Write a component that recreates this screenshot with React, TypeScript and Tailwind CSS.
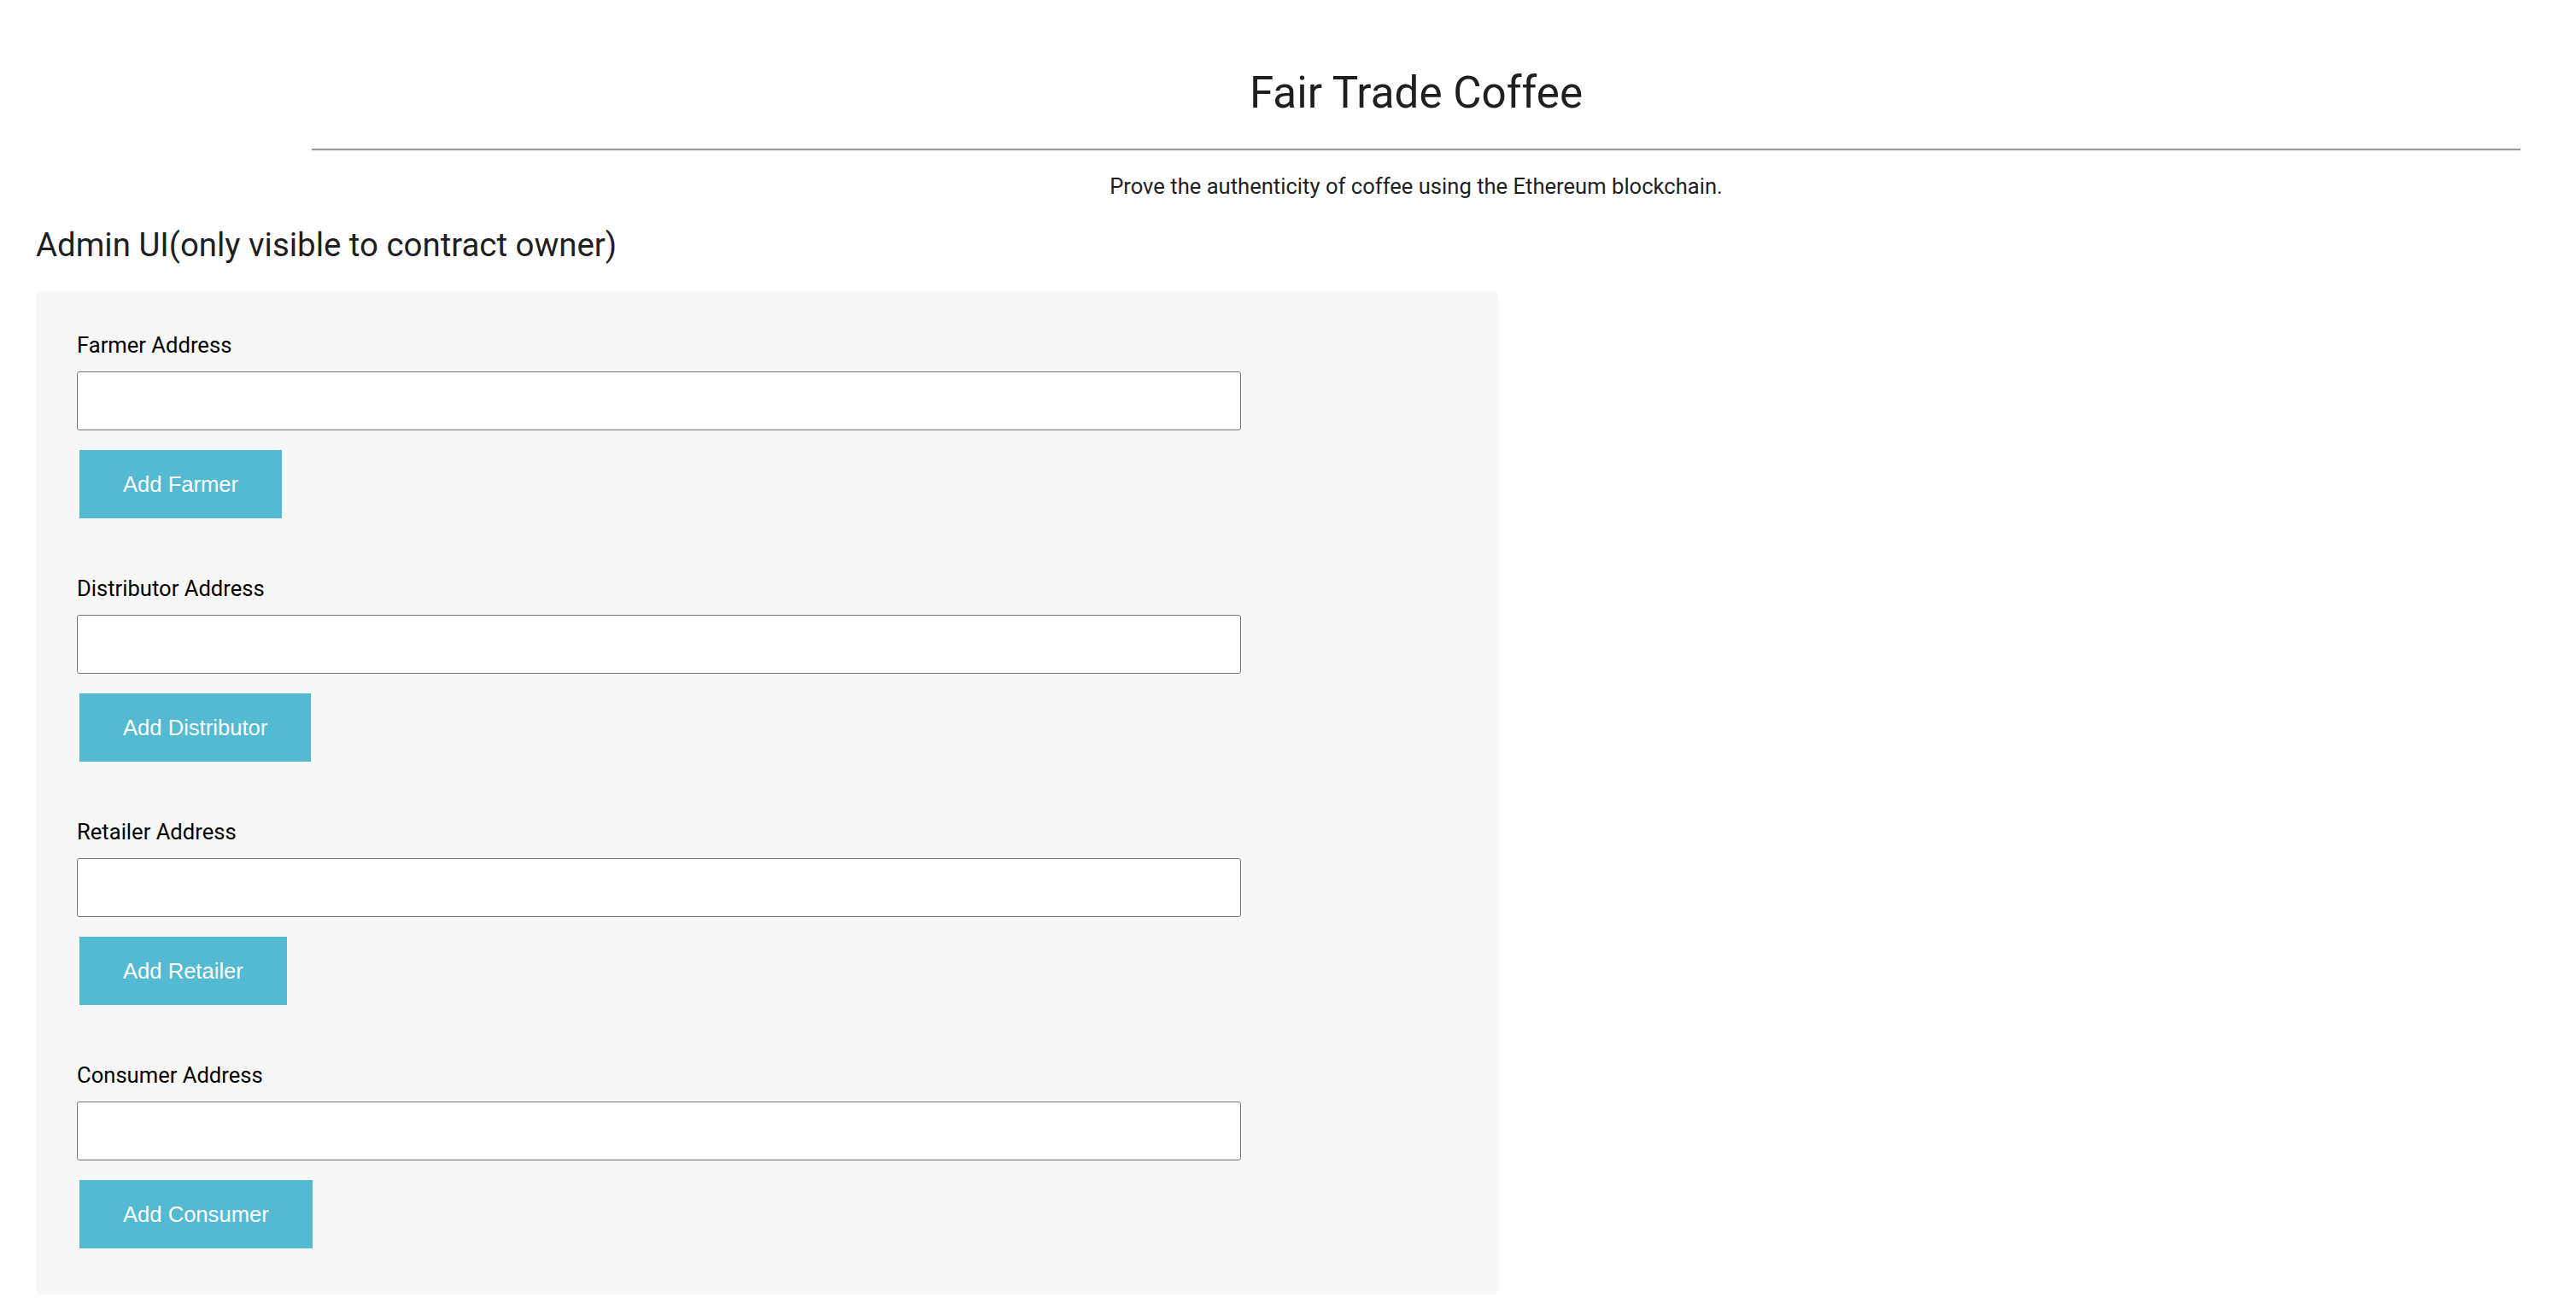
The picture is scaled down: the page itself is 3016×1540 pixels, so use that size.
import * as React from 'react';

const roles = [
  { label: 'Farmer Address', button: 'Add Farmer' },
  { label: 'Distributor Address', button: 'Add Distributor' },
  { label: 'Retailer Address', button: 'Add Retailer' },
  { label: 'Consumer Address', button: 'Add Consumer' },
];

function RoleForm({ label, button }: { label: string; button: string }) {
  return <div className="flex flex-col items-start">
    <label className="text-[25.6px] leading-[26px] text-black">{label}</label>
    <input type="text" className="mt-[18px] w-[1363px] h-[69px] bg-white border border-[#767676] rounded-[3px] px-3 text-[24px] outline-none" />
    <button className="mt-[23px] ml-[3px] h-[80px] px-[51px] bg-[#53bad2] text-white text-[25.6px] font-['Liberation_Sans',Arial,sans-serif]">
      {button}
    </button>
  </div>
}

export default function App() {
  return <div className="min-h-screen bg-white font-['Roboto',sans-serif] text-[#1f1f1f]">
    <div className="ml-[365px] mr-[65px] text-center">
      <h1 className="pt-[83px] text-[51.2px] leading-[51px]">Fair Trade Coffee</h1>
      <hr className="mt-[40px] border-0 border-t-2 border-[#9c9c9c]" />
      <div className="h-px bg-[#eeeeee]" />
      <p className="mt-[28px] text-[25.6px] leading-[26px]">Prove the authenticity of coffee using the Ethereum blockchain.</p>
    </div>

    <div className="ml-[42px] mt-[37px]">
      <h2 className="text-[38.4px] leading-[38px]">Admin UI(only visible to contract owner)</h2>
      <div className="mt-[35px] w-[1712px] bg-[#f7f7f7] rounded-[6px] pl-[48px] pt-[50px] pb-[54px] flex flex-col gap-[69px]">
        {roles.map(r => <RoleForm key={r.label} label={r.label} button={r.button} />)}
      </div>
    </div>
  </div>
}
